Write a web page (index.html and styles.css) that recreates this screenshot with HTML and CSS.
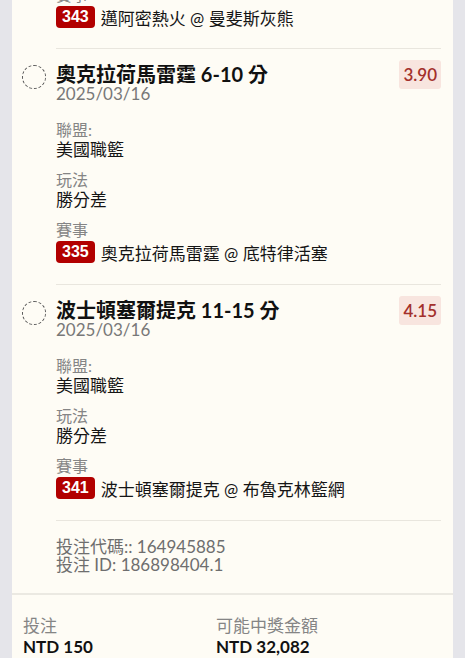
FILE: index.html
```html
<!DOCTYPE html>
<html lang="zh-Hant">
<head>
<meta charset="utf-8">
<title>投注單</title>
<link rel="stylesheet" href="styles.css">
</head>
<body>
<div class="card">
  <div class="bet bet-partial">
    <div></div>
    <div class="bet-tail">
      <div class="label">賽事</div>
      <div class="event"><span class="num">343</span><span>邁阿密熱火 @ 曼斐斯灰熊</span></div>
    </div>
  </div>

  <div class="bet">
    <div class="radio"></div>
    <div class="bet-body">
      <div class="pick-row">
        <div class="pick">奧克拉荷馬雷霆 6-10 分</div>
        <div class="odds">3.90</div>
      </div>
      <div class="date">2025/03/16</div>
      <div class="details">
        <div class="label">聯盟:</div>
        <div class="value">美國職籃</div>
        <div class="label gap">玩法</div>
        <div class="value">勝分差</div>
        <div class="label gap">賽事</div>
        <div class="event"><span class="num">335</span><span>奧克拉荷馬雷霆 @ 底特律活塞</span></div>
      </div>
    </div>
  </div>

  <div class="bet">
    <div class="radio"></div>
    <div class="bet-body">
      <div class="pick-row">
        <div class="pick">波士頓塞爾提克 11-15 分</div>
        <div class="odds">4.15</div>
      </div>
      <div class="date">2025/03/16</div>
      <div class="details">
        <div class="label">聯盟:</div>
        <div class="value">美國職籃</div>
        <div class="label gap">玩法</div>
        <div class="value">勝分差</div>
        <div class="label gap">賽事</div>
        <div class="event"><span class="num">341</span><span>波士頓塞爾提克 @ 布魯克林籃網</span></div>
      </div>
    </div>
  </div>

  <div class="bet">
    <div></div>
    <div class="ticket">
      <div>投注代碼:: 164945885</div>
      <div>投注 ID: 186898404.1</div>
    </div>
  </div>

  <div class="summary">
    <div>
      <div class="sum-label">投注</div>
      <div class="sum-value">NTD 150</div>
    </div>
    <div>
      <div class="sum-label">可能中獎金額</div>
      <div class="sum-value">NTD 32,082</div>
    </div>
  </div>
</div>
</body>
</html>
```

FILE: styles.css
```css
html, body {
  margin: 0;
  padding: 0;
  background: #e5e5ea;
}

body {
  font-family: Lato, "Noto Sans CJK TC", sans-serif;
  color: #151515;
  height: 658px;
  overflow: hidden;
}

.card {
  margin: 0 12px;
  background: #fefcf5;
  min-height: 700px;
}

.bet {
  display: grid;
  grid-template-columns: 24px 1fr;
  column-gap: 10px;
  padding: 0 12px 0 10px;
}

.bet-partial {
  margin-top: -15px;
}

.bet-tail {
  padding-bottom: 19px;
}

.bet-body {
  border-top: 1px solid #e9e6de;
  padding: 15px 0 20px;
}

.radio {
  width: 22px;
  height: 22px;
  margin-top: 17px;
  border: 1px dashed #5a5a5a;
  border-radius: 50%;
}

.pick-row {
  display: flex;
  align-items: center;
  justify-content: space-between;
  height: 21px;
}

.pick {
  font-size: 20px;
  font-weight: 700;
  line-height: 21px;
  color: #111;
}

.odds {
  font-size: 17px;
  font-weight: 600;
  line-height: 29px;
  padding: 0 4px;
  margin-top: -1px;
  background: #f8e5df;
  color: #a3302b;
  border-radius: 3px;
}

.date {
  font-size: 17px;
  line-height: 18px;
  color: #787878;
}

.details {
  margin-top: 17px;
}

.label {
  font-size: 16px;
  line-height: 20px;
  color: #858585;
}

.label.gap {
  margin-top: 10px;
}

.value {
  font-size: 17px;
  line-height: 20px;
  color: #151515;
}

.event {
  display: flex;
  align-items: center;
  gap: 6px;
  height: 24px;
  font-size: 17px;
  color: #151515;
}

.num {
  display: inline-block;
  background: #b20000;
  color: #fff;
  font-family: "Liberation Sans", Arial, sans-serif;
  font-weight: 700;
  font-size: 16px;
  line-height: 22px;
  padding: 0 6px;
  border-radius: 4px;
}

.ticket {
  border-top: 1px solid #e9e6de;
  padding: 17px 0 19px;
  font-size: 17px;
  line-height: 18px;
  color: #6e6e6e;
}

.summary {
  border-top: 2px solid #ebe9e2;
  display: grid;
  grid-template-columns: 193px 1fr;
  padding: 21px 11px 0;
}

.sum-label {
  font-size: 17px;
  line-height: 20px;
  color: #858585;
}

.sum-value {
  font-size: 17px;
  line-height: 22px;
  font-weight: 700;
  color: #111;
}
```
